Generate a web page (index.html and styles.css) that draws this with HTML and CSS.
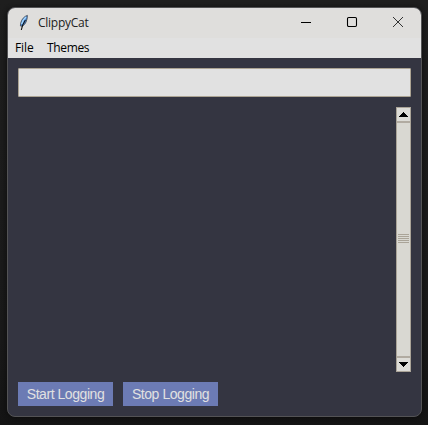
FILE: index.html
```html
<!DOCTYPE html>
<html lang="en">
<head>
<meta charset="utf-8">
<title>ClippyCat</title>
<link rel="stylesheet" href="styles.css">
</head>
<body>
<div class="window">
  <header class="titlebar">
    <svg class="feather" width="12" height="18" viewBox="0 0 12 18">
      <path d="M9.4 1.4C6.4 2.2 3.4 5.4 2.7 9.2L2.4 12L4.4 12.2C7.4 10.5 9.3 6.5 9.4 1.4Z" fill="#4b8fe0" stroke="#4a505a" stroke-width=".9"/>
      <path d="M8 3C5.8 5 4.2 7.2 3.7 10.2" fill="none" stroke="#a5d6fc" stroke-width="1.5"/>
      <path d="M7.4 6C5.4 9 4 11.5 3.3 16" fill="none" stroke="#111" stroke-width="1.1"/>
    </svg>
    <span class="title">ClippyCat</span>
    <div class="controls">
      <svg width="10" height="10" viewBox="0 0 10 10"><path d="M0 5.5H10" stroke="#000"/></svg>
      <svg width="10" height="10" viewBox="0 0 10 10"><rect x=".5" y=".5" width="9" height="9" rx="1.2" fill="none" stroke="#000" stroke-width="1.1"/></svg>
      <svg width="10" height="10" viewBox="0 0 10 10"><path d="M0 0L10 10M10 0L0 10" stroke="#333"/></svg>
    </div>
  </header>
  <nav class="menubar"><span class="file">File</span><span class="themes">Themes</span></nav>
  <main class="content">
    <input class="entry" type="text" aria-label="Search">
    <div class="list">
      <div class="scrollbar">
        <div class="arrow"><svg width="9" height="5" viewBox="0 0 9 5" shape-rendering="crispEdges"><path d="M4 0h1v1h1v1h1v1h1v1h1v1H0V4h1V3h1V2h1V1h1z"/></svg></div>
        <div class="thumb"><i></i><i></i><i></i><i></i><i></i></div>
        <div class="arrow"><svg width="9" height="5" viewBox="0 0 9 5" shape-rendering="crispEdges"><path d="M0 0h9v1H8v1H7v1H6v1H5v1H4V4H3V3H2V2H1V1H0z"/></svg></div>
      </div>
    </div>
    <div class="actions">
      <button class="start">Start Logging</button>
      <button class="stop">Stop Logging</button>
    </div>
  </main>
</div>
</body>
</html>
```
FILE: styles.css
```css
* { box-sizing: border-box; }
body {
  margin: 0;
  height: 425px;
  padding: 7px 6px 8px 7px;
  background: linear-gradient(#1e1e1e, #191919 80%, #141414);
  overflow: hidden;
}
.window {
  height: 410px;
  display: flex;
  flex-direction: column;
  border: 1px solid #535355;
  border-radius: 8px;
  overflow: hidden;
  background: #343541;
  box-shadow: 0 1px 5px #0c0c0c;
  font-family: "Open Sans", "Noto Sans", sans-serif;
  color: #000;
}
.titlebar {
  height: 30px;
  flex: none;
  display: flex;
  align-items: center;
  background: #dfdedc;
}
.feather { margin: -1px 0 0 10px; }
.title {
  margin-left: 8px;
  font-size: 12px;
  line-height: 16px;
  letter-spacing: -0.25px;
  color: #222;
}
.controls {
  margin: -2px 18px 0 auto;
  display: flex;
  gap: 36px;
}
.controls svg { display: block; overflow: visible; }
.menubar {
  height: 20px;
  flex: none;
  display: flex;
  gap: 14px;
  padding-left: 7px;
  background: #e1e1e1;
  font-size: 12px;
  line-height: 20px;
}
.file { width: 18px; letter-spacing: -0.1px; }
.themes { letter-spacing: -0.35px; }
.content {
  flex: 1;
  display: flex;
  flex-direction: column;
  gap: 10px;
  padding: 10px;
}
.entry {
  display: block;
  width: 100%;
  height: 29px;
  border: 1px solid #aca493;
  border-radius: 1px;
  background: #e1e1e1;
  outline: 0;
}
.list {
  height: 265px;
  display: flex;
  justify-content: flex-end;
}
.scrollbar {
  width: 15px;
  display: flex;
  flex-direction: column;
  border: 1px solid #aaa498;
  background: #d9d8d2;
}
.arrow {
  height: 13px;
  display: flex;
  align-items: center;
  justify-content: center;
  background: #dddcd7;
}
.thumb {
  flex: 1;
  display: flex;
  flex-direction: column;
  align-items: center;
  justify-content: center;
  gap: 1px;
  padding-bottom: 2px;
  border: solid #b1aba1;
  border-width: 2px 0;
}
.thumb i { width: 11px; height: 1px; background: #aaa498; }
.actions { display: flex; gap: 10px; }
.actions button {
  width: 95px;
  height: 24px;
  padding: 1px 0 0;
  border: 0;
  background: #6c7bb4;
  color: #e1e1e1;
  font: 14px/23px "Liberation Sans", Arial, sans-serif;
  letter-spacing: -0.45px;
  white-space: nowrap;
}
```
